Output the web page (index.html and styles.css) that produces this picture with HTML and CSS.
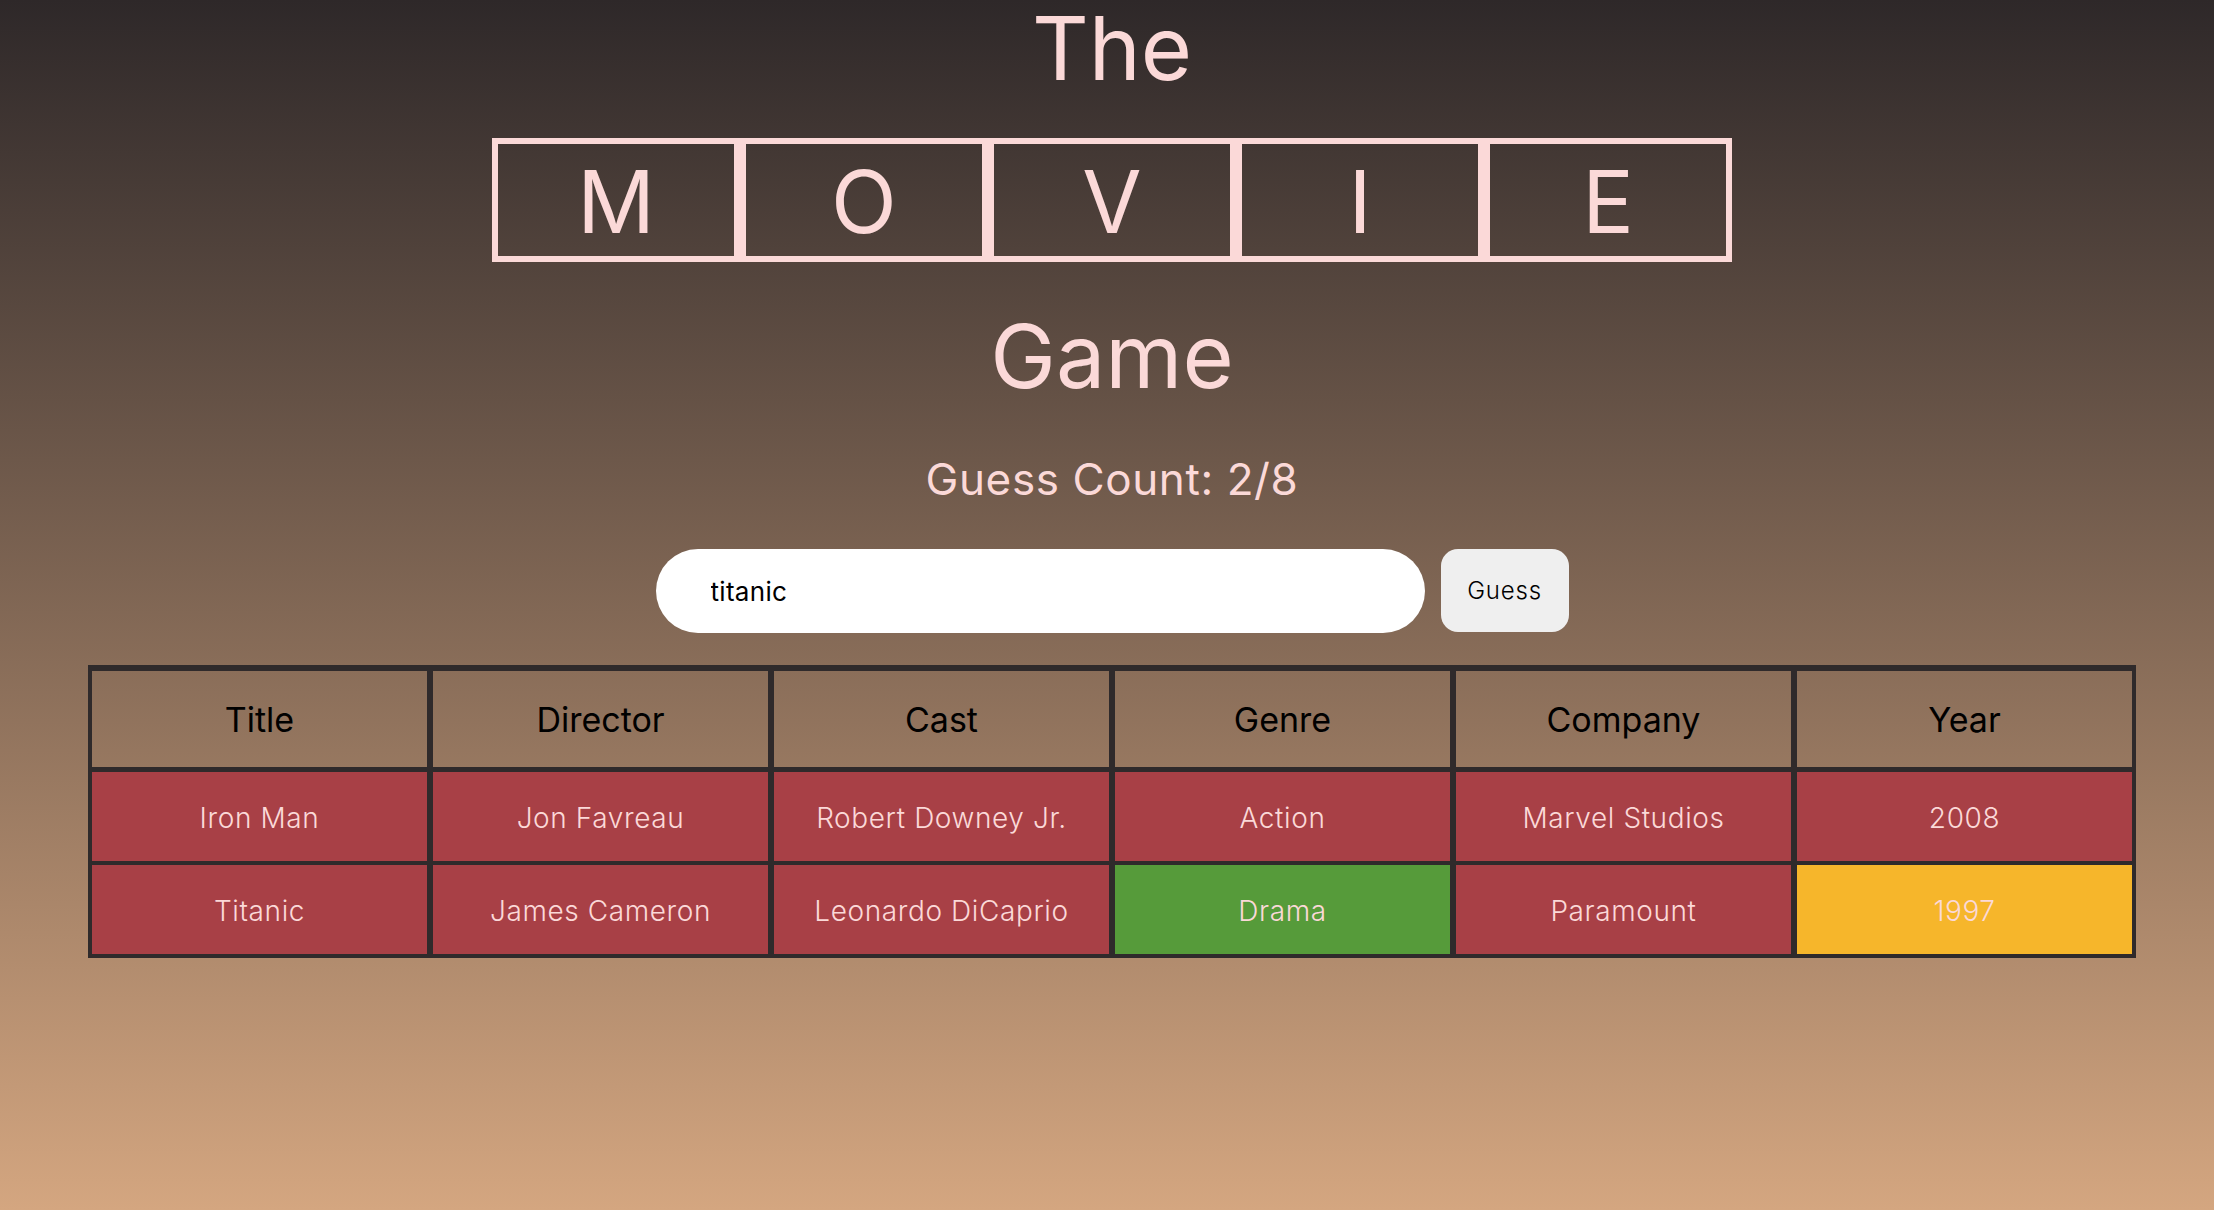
FILE: index.html
```html
<!DOCTYPE html>
<html lang="en">
<head>
<meta charset="utf-8">
<title>The Movie Game</title>
<link rel="stylesheet" href="styles.css">
</head>
<body>
<main class="page">
  <h1 class="title-word">The</h1>
  <div class="letters">
    <div class="letter">M</div>
    <div class="letter">O</div>
    <div class="letter">V</div>
    <div class="letter">I</div>
    <div class="letter">E</div>
  </div>
  <h1 class="title-word game">Game</h1>
  <h2 class="count">Guess Count: 2/8</h2>
  <form class="guess-form">
    <input class="guess-input" type="text" value="titanic">
    <button class="guess-btn" type="button">Guess</button>
  </form>
  <table class="results">
    <thead>
      <tr><th>Title</th><th>Director</th><th>Cast</th><th>Genre</th><th>Company</th><th>Year</th></tr>
    </thead>
    <tbody>
      <tr>
        <td class="miss">Iron Man</td>
        <td class="miss">Jon Favreau</td>
        <td class="miss">Robert Downey Jr.</td>
        <td class="miss">Action</td>
        <td class="miss">Marvel Studios</td>
        <td class="miss">2008</td>
      </tr>
      <tr>
        <td class="miss">Titanic</td>
        <td class="miss">James Cameron</td>
        <td class="miss">Leonardo DiCaprio</td>
        <td class="hit">Drama</td>
        <td class="miss">Paramount</td>
        <td class="near">1997</td>
      </tr>
    </tbody>
  </table>
</main>
</body>
</html>
```

FILE: styles.css
```css
html, body {
  margin: 0;
  padding: 0;
}

body {
  min-height: 1210px;
  background: linear-gradient(to bottom, #2e2829 0%, #d4a680 100%);
  font-family: Inter, "Noto Sans", sans-serif;
  color: #fbd9d8;
}

.page {
  display: flex;
  flex-direction: column;
  align-items: center;
  padding-left: 10px;
}

.title-word {
  margin: 4px 0 0;
  font-size: 88px;
  line-height: 88px;
  font-weight: 400;
}

.title-word.game {
  margin-top: 50px;
}

.letters {
  display: flex;
  margin-top: 46px;
}

.letter {
  box-sizing: border-box;
  width: 248px;
  height: 124px;
  border: 6px solid #fbd9d8;
  display: flex;
  align-items: center;
  justify-content: center;
  padding-top: 4px;
  font-size: 86px;
  line-height: 86px;
}

.count {
  margin: 57px 0 0;
  font-size: 44px;
  line-height: 44px;
  font-weight: 400;
  letter-spacing: 0.6px;
}

.guess-form {
  display: flex;
  gap: 16px;
  margin: 48px 0 0;
}

.guess-input {
  box-sizing: border-box;
  width: 769px;
  height: 84px;
  border: none;
  border-radius: 42px;
  background: #ffffff;
  padding: 0 0 0 55px;
  font-family: Inter, "Noto Sans", sans-serif;
  font-size: 26px;
  letter-spacing: 0.3px;
  color: #000;
  outline: none;
}

.guess-btn {
  width: 128px;
  height: 83px;
  border: none;
  border-radius: 17px;
  background: #efefef;
  font-family: Inter, "Noto Sans", sans-serif;
  font-size: 24px;
  font-weight: 300;
  letter-spacing: 0.8px;
  color: #000;
}

.results {
  align-self: flex-start;
  margin: 32px 0 0 78px;
  width: 2048px;
  table-layout: fixed;
  border-collapse: separate;
  border-spacing: 0;
  border-top: 3px solid #2f2a2b;
  border-left: 1px solid #2f2a2b;
  border-right: 1px solid #2f2a2b;
  border-bottom: 2px solid #2f2a2b;
}

.results th {
  height: 96px;
  padding: 0;
  border: 3px solid #2f2a2b;
  font-size: 34px;
  font-weight: 400;
  color: #000;
  text-align: center;
}

.results td {
  height: 87px;
  padding: 2px 0 0;
  border-left: 3px solid #2f2a2b;
  border-right: 3px solid #2f2a2b;
  border-top: 2px solid #2f2a2b;
  border-bottom: 2px solid #2f2a2b;
  font-size: 28px;
  font-weight: 300;
  letter-spacing: 0.6px;
  color: #fbd9d8;
  text-align: center;
}

.results td.miss { background: #a84046; }
.results td.hit { background: #569b3a; }
.results td.near { background: #f6b62b; }
```
